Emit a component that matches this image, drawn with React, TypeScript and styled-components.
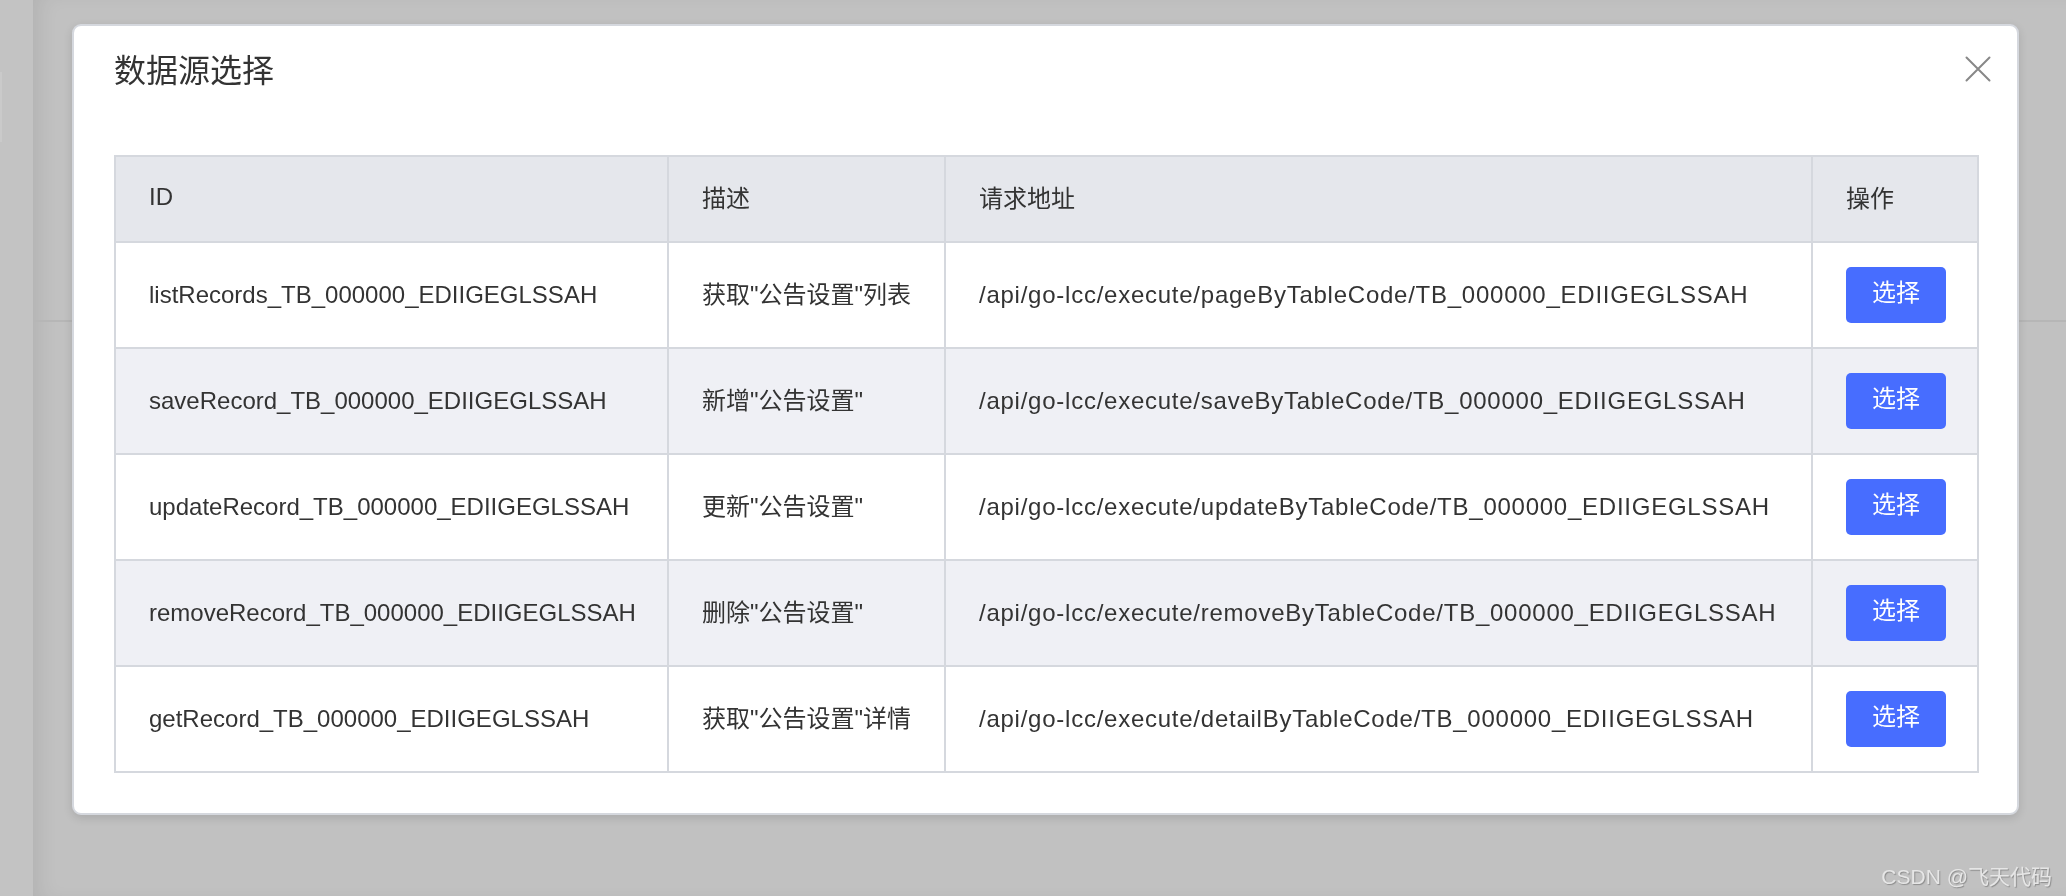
import React from "react";
import styled, { createGlobalStyle } from "styled-components";

const GlobalStyle = createGlobalStyle`
  *, *::before, *::after {
    box-sizing: border-box;
  }
  html, body {
    margin: 0;
    padding: 0;
    height: 100%;
    overflow: hidden;
  }
  body {
    font-family: "Liberation Sans", "Noto Sans CJK SC", sans-serif;
    color: #333333;
  }
`;

const FONT = `"Liberation Sans", "Noto Sans CJK SC", sans-serif`;

const Page = styled.div`
  display: flex;
  height: 100vh;
  background-color: #c2c2c2;
`;

const Sidebar = styled.div`
  display: flex;
  flex-direction: column;
  width: 33px;
  padding-top: 72px;
  background-color: #c3c3c3;
`;

const SidebarMark = styled.div`
  width: 2px;
  height: 70px;
  background-color: #cacaca;
`;

const Main = styled.div`
  flex: 1;
  background-color: #c1c1c1;
  box-shadow: inset 14px 0 22px -10px rgba(0, 0, 0, 0.09);
`;

const MainHeader = styled.div`
  height: 322px;
  border-bottom: 2px solid #b6b6b6;
`;

const Overlay = styled.div`
  position: fixed;
  inset: 0;
  display: flex;
  align-items: flex-start;
  padding: 24px 47px 0 72px;
`;

const Modal = styled.div`
  position: relative;
  flex: 1;
  min-width: 0;
  background-color: #ffffff;
  border: 2px solid #d5d8de;
  border-radius: 9px;
  box-shadow: 0 3px 10px rgba(0, 0, 0, 0.12);
  padding: 0 40px 40px 40px;
`;

const ModalHeader = styled.div`
  padding-top: 23px;
  margin-bottom: 62px;
`;

const Title = styled.h2`
  margin: 0;
  font-family: ${FONT};
  font-size: 32px;
  line-height: 44px;
  font-weight: 400;
  color: #333333;
`;

const CloseButton = styled.button`
  position: absolute;
  top: 29px;
  right: 25px;
  width: 28px;
  height: 28px;
  padding: 0;
  border: none;
  background: transparent;
  display: flex;
  align-items: center;
  justify-content: center;
  cursor: pointer;
`;

const Table = styled.table`
  width: 100%;
  border-collapse: collapse;
  table-layout: fixed;
  font-family: ${FONT};
  font-size: 24px;
  color: #333333;
`;

const HeadRow = styled.tr`
  height: 86px;
  background-color: #e5e7ec;
`;

const Row = styled.tr<{ $striped: boolean }>`
  height: 106px;
  background-color: ${(p) => (p.$striped ? "#eff0f5" : "#ffffff")};
`;

const Th = styled.th<{ $width: number }>`
  width: ${(p) => p.$width}px;
  border: 2px solid #d5d8de;
  padding: 0 10px 5px 33px;
  text-align: left;
  font-weight: 400;
  white-space: nowrap;
`;

const Td = styled.td<{ $spacing?: number; $lift?: number }>`
  border: 2px solid #d5d8de;
  padding: 0 10px ${(p) => p.$lift ?? 0}px 33px;
  white-space: nowrap;
  letter-spacing: ${(p) => p.$spacing ?? 0}px;
`;

const SelectButton = styled.button`
  display: block;
  width: 100px;
  height: 56px;
  padding: 0 0 5px;
  border: none;
  border-radius: 5px;
  background-color: #476dff;
  color: #ffffff;
  font-family: ${FONT};
  font-size: 24px;
  line-height: 51px;
  cursor: pointer;
`;

const Watermark = styled.div`
  position: fixed;
  right: 14px;
  bottom: 6px;
  font-family: ${FONT};
  font-size: 21px;
  color: #e6e6e6;
  text-shadow: 1px 1px 1px rgba(0, 0, 0, 0.28);
`;

const columns = [
  { title: "ID", width: 553 },
  { title: "描述", width: 277 },
  { title: "请求地址", width: 867 },
  { title: "操作", width: 166 },
];

const records = [
  {
    id: "listRecords_TB_000000_EDIIGEGLSSAH",
    desc: '获取"公告设置"列表',
    url: "/api/go-lcc/execute/pageByTableCode/TB_000000_EDIIGEGLSSAH",
  },
  {
    id: "saveRecord_TB_000000_EDIIGEGLSSAH",
    desc: '新增"公告设置"',
    url: "/api/go-lcc/execute/saveByTableCode/TB_000000_EDIIGEGLSSAH",
  },
  {
    id: "updateRecord_TB_000000_EDIIGEGLSSAH",
    desc: '更新"公告设置"',
    url: "/api/go-lcc/execute/updateByTableCode/TB_000000_EDIIGEGLSSAH",
  },
  {
    id: "removeRecord_TB_000000_EDIIGEGLSSAH",
    desc: '删除"公告设置"',
    url: "/api/go-lcc/execute/removeByTableCode/TB_000000_EDIIGEGLSSAH",
  },
  {
    id: "getRecord_TB_000000_EDIIGEGLSSAH",
    desc: '获取"公告设置"详情',
    url: "/api/go-lcc/execute/detailByTableCode/TB_000000_EDIIGEGLSSAH",
  },
];

const CloseIcon: React.FC = () => (
  <svg width="26" height="26" viewBox="0 0 26 26" fill="none">
    <path
      d="M1.5 1.5 L24.5 24.5 M24.5 1.5 L1.5 24.5"
      stroke="#888888"
      strokeWidth="2"
      strokeLinecap="round"
    />
  </svg>
);

const App: React.FC = () => {
  return (
    <>
      <GlobalStyle />
      <Page>
        <Sidebar>
          <SidebarMark />
        </Sidebar>
        <Main>
          <MainHeader />
        </Main>
      </Page>

      <Overlay>
        <Modal>
          <ModalHeader>
            <Title>数据源选择</Title>
          </ModalHeader>
          <CloseButton aria-label="关闭">
            <CloseIcon />
          </CloseButton>

          <Table>
            <thead>
              <HeadRow>
                {columns.map((c) => (
                  <Th key={c.title} $width={c.width}>
                    {c.title}
                  </Th>
                ))}
              </HeadRow>
            </thead>
            <tbody>
              {records.map((r, i) => (
                <Row key={r.id} $striped={i % 2 === 1}>
                  <Td>{r.id}</Td>
                  <Td $lift={5}>{r.desc}</Td>
                  <Td $spacing={0.75}>{r.url}</Td>
                  <Td>
                    <SelectButton>选择</SelectButton>
                  </Td>
                </Row>
              ))}
            </tbody>
          </Table>
        </Modal>
      </Overlay>

      <Watermark>CSDN @飞天代码</Watermark>
    </>
  );
};

export default App;
